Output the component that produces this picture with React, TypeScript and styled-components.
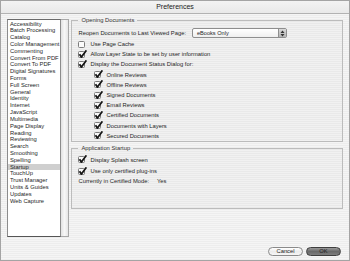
import styled, { createGlobalStyle, css } from "styled-components";

const GlobalStyle = createGlobalStyle`
  html, body {
    margin: 0;
    padding: 0;
    background: #e6e6e6;
  }
  * {
    box-sizing: border-box;
  }
`;

const categories = [
  "Accessibility",
  "Batch Processing",
  "Catalog",
  "Color Management",
  "Commenting",
  "Convert From PDF",
  "Convert To PDF",
  "Digital Signatures",
  "Forms",
  "Full Screen",
  "General",
  "Identity",
  "Internet",
  "JavaScript",
  "Multimedia",
  "Page Display",
  "Reading",
  "Reviewing",
  "Search",
  "Smoothing",
  "Spelling",
  "Startup",
  "TouchUp",
  "Trust Manager",
  "Units & Guides",
  "Updates",
  "Web Capture",
];

const statusDocs = [
  "Online Reviews",
  "Offline Reviews",
  "Signed Documents",
  "Email Reviews",
  "Certified Documents",
  "Documents with Layers",
  "Secured Documents",
];

const CheckBox = ({ checked }: { checked: boolean }) => (
  <svg width="9" height="9" viewBox="0 0 9 9">
    <rect x="0.5" y="1.5" width="6" height="6" rx="1" fill="#fbfbfb" stroke="#7c7c7c" />
    {checked && (
      <path d="M1.5 4.2 L3.4 7 L8.4 0.4" fill="none" stroke="#151515" strokeWidth="1.8" strokeLinejoin="round" />
    )}
  </svg>
);

const App = () => {
  return (
    <>
      <GlobalStyle />
      <Window>
        <TitleBar>Preferences</TitleBar>
        <Body>
          <ListPane>
            <List>
              {categories.map((c) => (
                <ListItem key={c} $selected={c === "Startup"}>
                  {c}
                </ListItem>
              ))}
            </List>
            <ScrollTrack />
          </ListPane>
          <Panel>
            <Group>
              <Legend>Opening Documents</Legend>
              <PopupRow>
                <Label>Reopen Documents to Last Viewed Page:</Label>
                <Popup>
                  <span>eBooks Only</span>
                  <PopupArrows>
                    <svg width="5" height="7" viewBox="0 0 5 7">
                      <path d="M2.5 0.5 L4.5 3 L0.5 3 Z M2.5 6.5 L4.5 4 L0.5 4 Z" fill="#333" />
                    </svg>
                  </PopupArrows>
                </Popup>
              </PopupRow>
              <CheckRow>
                <CheckBox checked={false} />
                <Label>Use Page Cache</Label>
              </CheckRow>
              <CheckRow>
                <CheckBox checked />
                <Label>Allow Layer State to be set by user information</Label>
              </CheckRow>
              <CheckRow>
                <CheckBox checked />
                <Label>Display the Document Status Dialog for:</Label>
              </CheckRow>
              {statusDocs.map((d) => (
                <CheckRow key={d} $indent>
                  <CheckBox checked />
                  <Label>{d}</Label>
                </CheckRow>
              ))}
            </Group>
            <Group $startup>
              <Legend>Application Startup</Legend>
              <CheckRow>
                <CheckBox checked />
                <Label>Display Splash screen</Label>
              </CheckRow>
              <CheckRow>
                <CheckBox checked />
                <Label>Use only certified plug-ins</Label>
              </CheckRow>
              <InfoRow>
                <Label>Currently in Certified Mode:</Label>
                <Label>Yes</Label>
              </InfoRow>
            </Group>
          </Panel>
        </Body>
        <Footer>
          <Button>Cancel</Button>
          <Button $primary>OK</Button>
        </Footer>
      </Window>
    </>
  );
};

const pinstripe = css`
  background: repeating-linear-gradient(
    to bottom,
    #ededed 0px,
    #ededed 1px,
    #f5f5f5 1px,
    #f5f5f5 2px
  );
`;

const Window = styled.div`
  width: 350px;
  height: 261px;
  display: flex;
  flex-direction: column;
  border: 1px solid #a4a4a4;
  ${pinstripe};
  font-family: "Liberation Sans", Arial, sans-serif;
  color: #262626;
`;

const TitleBar = styled.div`
  height: 13px;
  border-bottom: 1px solid #b2b2b2;
  background: linear-gradient(#f3f3f3, #e9e9e9);
  font-size: 7px;
  line-height: 12px;
  text-align: center;
  color: #222;
`;

const Body = styled.div`
  flex: 1;
  display: flex;
  align-items: flex-start;
  gap: 2px;
  padding: 3px 6px 0 6px;
`;

const ListPane = styled.div`
  display: flex;
  width: 66px;
  height: 218px;
  margin-top: 2px;
`;

const List = styled.div`
  flex: 1;
  background: #fff;
  border: 1px solid #8c8c8c;
  border-top-color: #6a6a6a;
  border-bottom-color: #555;
  padding-top: 0.5px;
`;

const ListItem = styled.div<{ $selected?: boolean }>`
  font-size: 5.8px;
  line-height: 6.82px;
  height: 6.82px;
  padding-left: 2px;
  white-space: nowrap;
  background: ${(p) => (p.$selected ? "#cfcfcf" : "transparent")};
`;

const ScrollTrack = styled.div`
  width: 8px;
  border: 1px solid #a8a8a8;
  border-left: none;
  background: linear-gradient(to right, #e2e2e2, #f7f7f7 50%, #e6e6e6);
`;

const Panel = styled.div`
  flex: 1;
  display: flex;
  flex-direction: column;
  gap: 3px;
`;

const Group = styled.fieldset<{ $startup?: boolean }>`
  margin: 0;
  padding: ${(p) => (p.$startup ? "3px 6px 22px" : "0 6px 0")};
  border: 1px solid #bcbcbc;
  background: rgba(0, 0, 0, 0.015);
  min-width: 0;
`;

const Legend = styled.legend`
  padding: 0 3px;
  font-size: 5.8px;
  line-height: 7px;
  color: #333;
`;

const Label = styled.span`
  font-size: 5.8px;
  white-space: nowrap;
`;

const PopupRow = styled.div`
  display: flex;
  align-items: center;
  margin-top: 4px;
  height: 10px;
  gap: 6px;
`;

const Popup = styled.div`
  display: flex;
  align-items: center;
  justify-content: space-between;
  width: 95px;
  height: 10px;
  margin-left: auto;
  margin-right: 49px;
  padding-left: 4px;
  border: 1px solid #8e8e8e;
  border-radius: 2px;
  background: linear-gradient(#ffffff, #efefef);
  font-size: 5.6px;
  overflow: hidden;
`;

const PopupArrows = styled.div`
  display: flex;
  align-items: center;
  justify-content: center;
  width: 8px;
  height: 100%;
  border-left: 1px solid #8e8e8e;
  background: linear-gradient(#d8d8d8, #b4b4b4);
`;

const CheckRow = styled.div<{ $indent?: boolean }>`
  display: flex;
  align-items: center;
  gap: 3px;
  height: 10.2px;
  padding-left: ${(p) => (p.$indent ? "16px" : "0")};
  &:nth-of-type(2) {
    margin-top: 1px;
  }
`;

const InfoRow = styled.div`
  display: flex;
  align-items: center;
  gap: 8px;
  height: 10px;
`;

const Footer = styled.div`
  display: flex;
  justify-content: flex-end;
  gap: 3px;
  padding: 9px 8px 4px 0;
`;

const Button = styled.div<{ $primary?: boolean }>`
  width: 35px;
  height: 9px;
  border-radius: 5px;
  font-size: 5.8px;
  line-height: 7px;
  text-align: center;
  border: 1px solid ${(p) => (p.$primary ? "#3e3e3e" : "#8a8a8a")};
  background: ${(p) =>
    p.$primary
      ? "linear-gradient(#9a9a9a, #6a6a6a 50%, #7e7e7e)"
      : "linear-gradient(#ffffff, #ececec 50%, #f6f6f6)"};
  color: ${(p) => (p.$primary ? "#1e1e1e" : "#222")};
`;

export default App;
